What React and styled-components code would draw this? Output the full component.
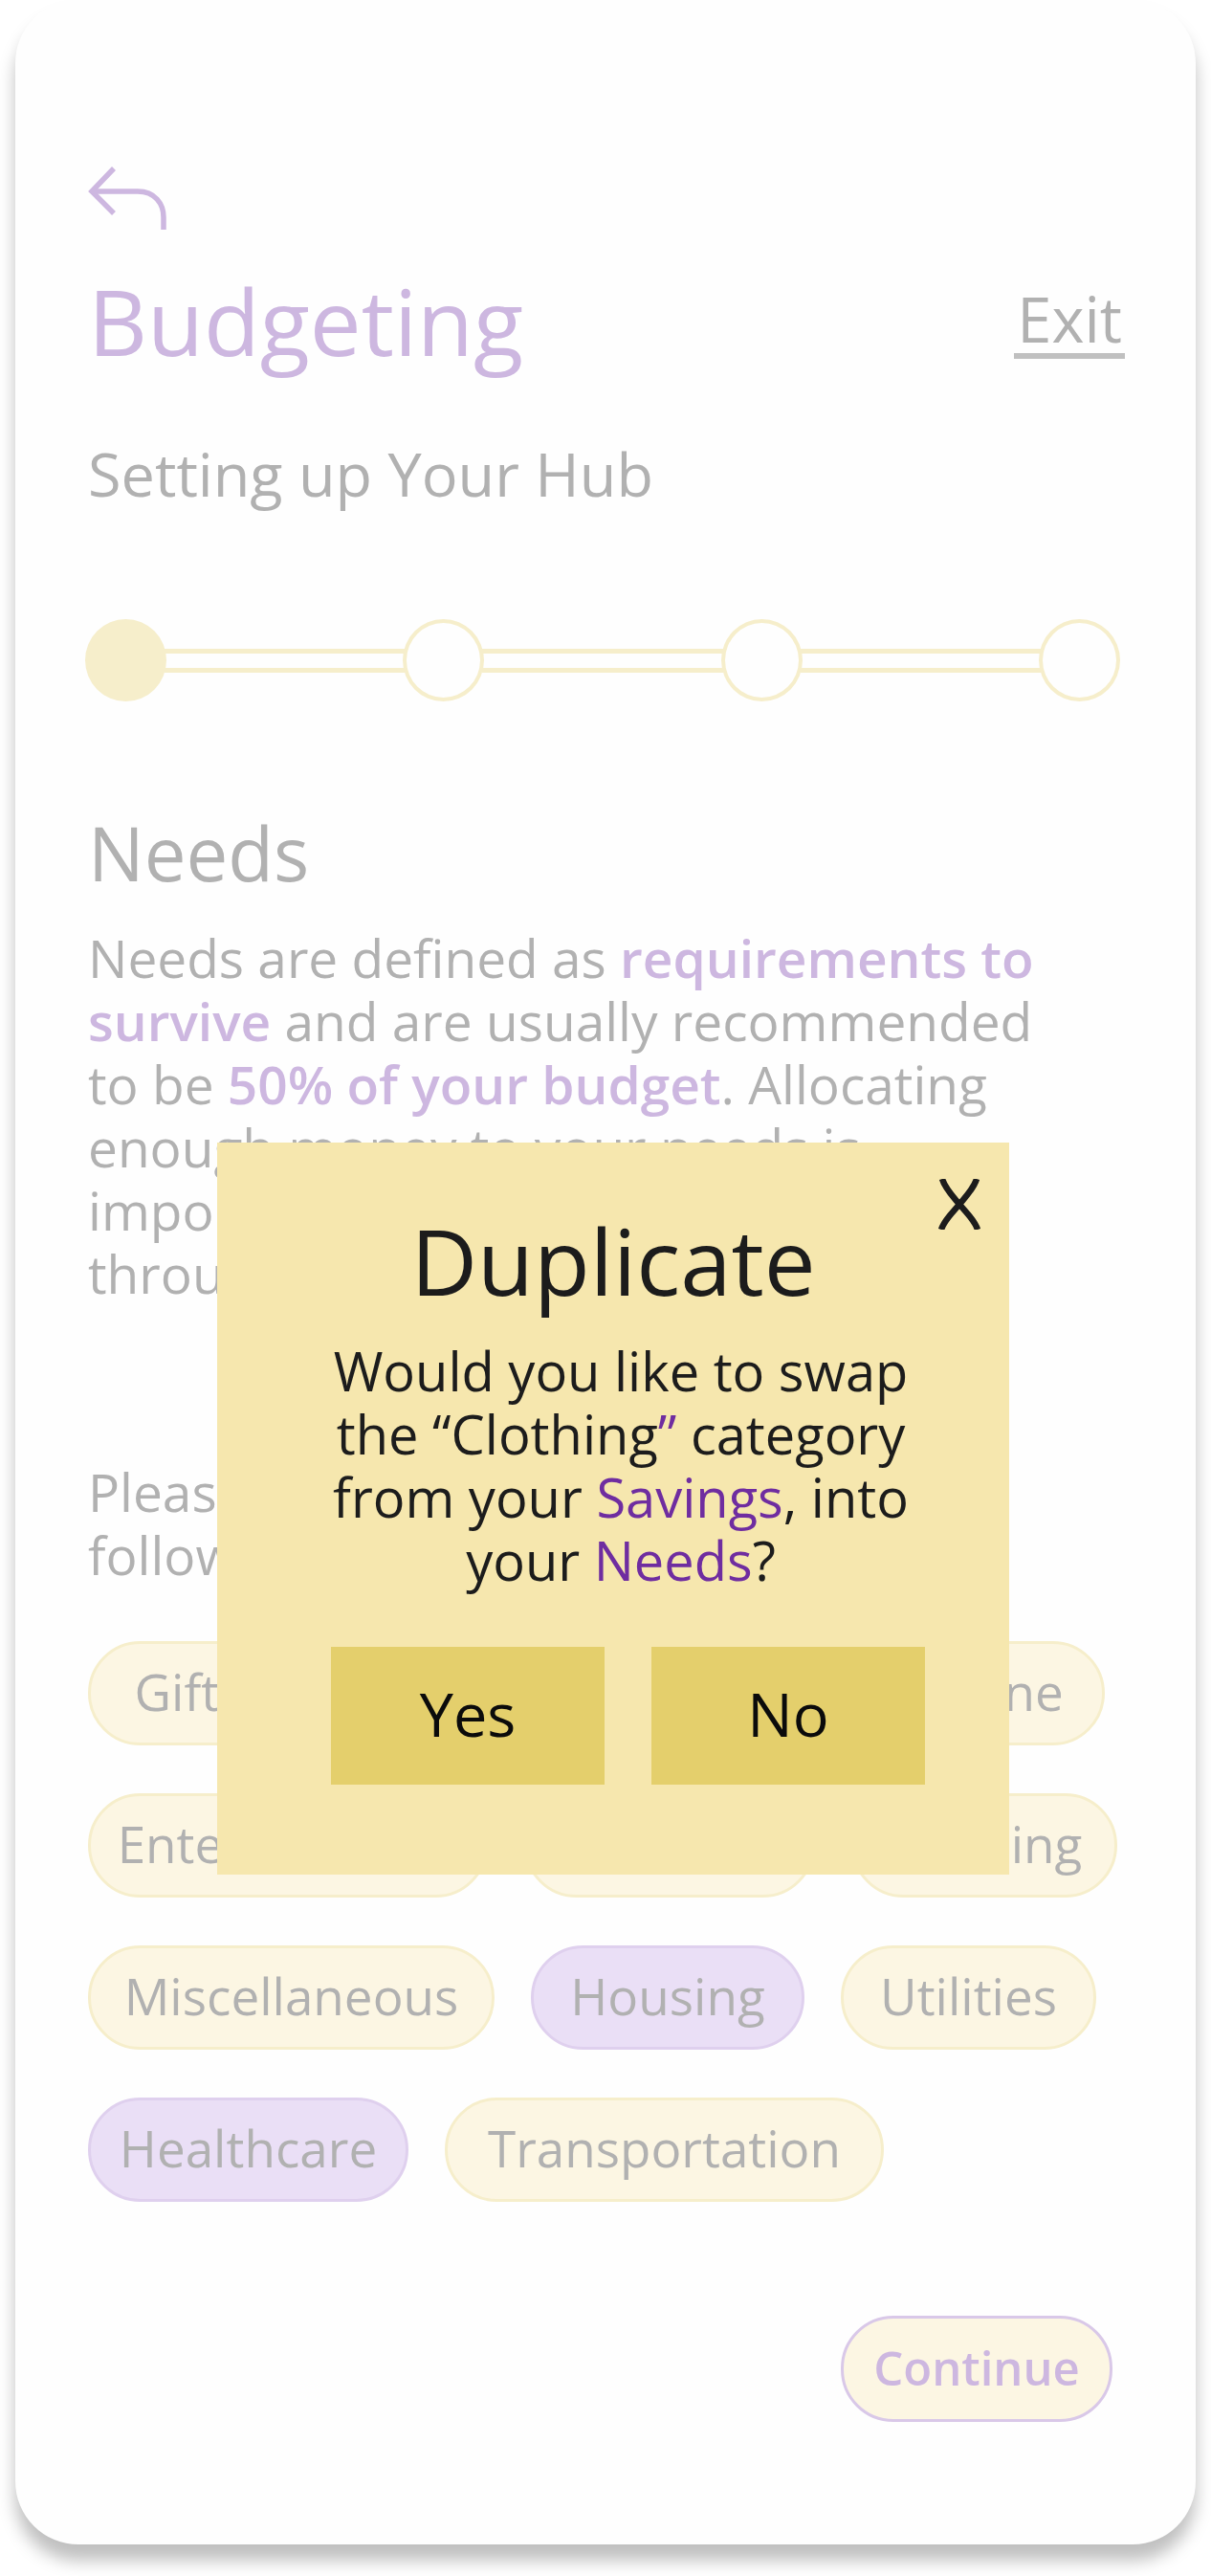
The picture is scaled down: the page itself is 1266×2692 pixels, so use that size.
import React from "react";
import styled, { createGlobalStyle } from "styled-components";

const color = {
  surface: "#fefefe",
  muted: "#b1b1b1",
  mutedPurple: "#cdb7e0",
  ink: "#1c1c1c",
  purple: "#6f2da0",
  track: "#f6eecb",
  cream: "#fcf6e3",
  lilac: "#eadff6",
  lilacEdge: "#dfd0ee",
  modal: "#f6e7ae",
  action: "#e4cf6c",
};

const GlobalStyle = createGlobalStyle`
  *, *::before, *::after { box-sizing: border-box; }
  body {
    margin: 0;
    background: #ffffff;
    font-family: "Open Sans", "Noto Sans", sans-serif;
  }
  button { font-family: inherit; cursor: pointer; }
  h1, h2, p, ol, ul { margin: 0; padding: 0; }
`;

const Page = styled.div`
  padding: 0 16px 33px;
`;

const Screen = styled.main`
  position: relative;
  display: flex;
  flex-direction: column;
  padding: 174px 74px 128px 76px;
  background: ${color.surface};
  border-radius: 66px;
  box-shadow: 0 17px 17px rgba(0, 0, 0, 0.25);
  color: ${color.muted};
`;

const BackButton = styled.button`
  align-self: flex-start;
  display: block;
  padding: 0;
  border: 0;
  background: none;
  color: ${color.mutedPurple};
  line-height: 0;
`;

const Header = styled.header`
  display: flex;
  align-items: center;
  justify-content: space-between;
  margin-top: 45px;
`;

const Title = styled.h1`
  font-size: 96px;
  line-height: 100px;
  font-weight: 400;
  color: ${color.mutedPurple};
`;

const ExitLink = styled.a`
  padding: 2px 3px 0;
  border-bottom: 6px solid #c0c0c0;
  font-size: 65px;
  line-height: 72px;
  color: inherit;
  text-decoration: none;
`;

const Subtitle = styled.p`
  margin-top: 77px;
  font-size: 63px;
  line-height: 66px;
`;

const Stepper = styled.ol`
  display: flex;
  align-items: center;
  margin: 119px 5px 0 -3px;
  list-style: none;
`;

const Step = styled.li`
  display: flex;
  align-items: center;
  flex: ${(p) => (p.$first ? "none" : "1")};
`;

const Dot = styled.span`
  flex: none;
  width: 85px;
  height: 86px;
  border: 4px solid ${color.track};
  border-radius: 50%;
  background: ${(p) => (p.$filled ? color.track : color.surface)};
`;

const Track = styled.span`
  flex: 1;
  height: 25px;
  margin: 0 -2px;
  border: solid ${color.track};
  border-width: 5px 0;
`;

const SectionTitle = styled.h2`
  margin-top: 118px;
  font-size: 78px;
  line-height: 80px;
  font-weight: 400;
`;

const Copy = styled.p`
  margin-top: ${(p) => p.$gap}px;
  font-size: 55px;
  line-height: 66px;
  white-space: nowrap;
`;

const Strong = styled.strong`
  font-weight: 600;
  color: ${color.mutedPurple};
`;

const ChipRows = styled.div`
  display: flex;
  flex-direction: column;
  gap: 50px;
  margin-top: 57px;
`;

const ChipRow = styled.div`
  display: flex;
  gap: 38px;
`;

const Chip = styled.button`
  flex: none;
  display: flex;
  align-items: center;
  justify-content: center;
  width: ${(p) => p.$width}px;
  height: 109px;
  padding: 0 0 4px;
  border: 3px solid ${(p) => (p.$selected ? color.lilacEdge : color.track)};
  border-radius: 55px;
  background: ${(p) => (p.$selected ? color.lilac : color.cream)};
  color: ${color.muted};
  font-size: 53px;
  line-height: 66px;
`;

const ContinueButton = styled.button`
  align-self: flex-end;
  width: 284px;
  height: 111px;
  margin: 119px 13px 0 0;
  padding: 0 0 4px;
  border: 3px solid #d9c8e8;
  border-radius: 55px;
  background: ${color.cream};
  color: ${color.mutedPurple};
  font-size: 49px;
  line-height: 66px;
  font-weight: 600;
`;

const Dialog = styled.section`
  position: absolute;
  top: 1194px;
  left: 211px;
  right: 195px;
  padding: 73px 0 94px;
  background: ${color.modal};
  color: ${color.ink};
  text-align: center;
`;

const CloseButton = styled.button`
  position: absolute;
  top: 38px;
  right: 30px;
  padding: 0;
  border: 0;
  background: none;
  color: inherit;
  line-height: 0;
`;

const DialogTitle = styled.h2`
  font-size: 96px;
  line-height: 100px;
  font-weight: 400;
`;

const DialogText = styled.p`
  margin-top: 32px;
  padding-left: 16px;
  font-size: 56px;
  line-height: 66px;
`;

const Accent = styled.span`
  color: ${color.purple};
`;

const Actions = styled.div`
  display: flex;
  gap: 49px;
  margin-top: 58px;
  padding: 0 88px 0 119px;
`;

const ActionButton = styled.button`
  flex: 1;
  height: 144px;
  padding: 0 0 4px;
  border: 0;
  background: ${color.action};
  color: #0b0b0b;
  font-size: 63px;
  line-height: 66px;
`;

const steps = ["Needs", "Wants", "Savings", "Review"];

const chipRows = [
  [
    { label: "Gifts", width: 211 },
    { label: "Subscriptions", width: 531 },
    { label: "Phone", width: 245 },
  ],
  [
    { label: "Entertainment", width: 418 },
    { label: "Groceries", width: 304 },
    { label: "Clothing", width: 278 },
  ],
  [
    { label: "Miscellaneous", width: 425 },
    { label: "Housing", width: 286, selected: true },
    { label: "Utilities", width: 267 },
  ],
  [
    { label: "Healthcare", width: 335, selected: true },
    { label: "Transportation", width: 459 },
  ],
];

function BackIcon() {
  return (
    <svg width="85" height="66" viewBox="0 0 85 66" fill="none" stroke="currentColor" strokeWidth="5.5" aria-hidden="true">
      <path d="M27 2 4 26l23 23" />
      <path d="M4 26h48c18 0 27 13 27 27v13" />
    </svg>
  );
}

function CloseIcon() {
  return (
    <svg width="44" height="53" viewBox="0 0 44 53" fill="none" stroke="currentColor" strokeWidth="6.5" aria-hidden="true">
      <path d="M4 0C7 10 15 18 22 26.5S38 43 41 53" />
      <path d="M40 0C37 10 29 18 22 26.5S6 43 3 53" />
    </svg>
  );
}

export default function App() {
  return (
    <Page>
      <GlobalStyle />
      <Screen>
        <BackButton type="button" aria-label="Back">
          <BackIcon />
        </BackButton>
        <Header>
          <Title>Budgeting</Title>
          <ExitLink href="#exit">Exit</ExitLink>
        </Header>
        <Subtitle>Setting up Your Hub</Subtitle>

        <Stepper>
          {steps.map((step, i) => (
            <Step key={step} $first={i === 0} aria-label={step}>
              {i > 0 && <Track />}
              <Dot $filled={i === 0} />
            </Step>
          ))}
        </Stepper>

        <SectionTitle>Needs</SectionTitle>
        <Copy $gap={37}>
          Needs are defined as <Strong>requirements to</Strong>
          <br />
          <Strong>survive</Strong> and are usually recommended
          <br />
          to be <Strong>50% of your budget</Strong>. Allocating
          <br />
          enough money to your needs is
          <br />
          important for your wellbeing
          <br />
          throughout the year.
        </Copy>
        <Copy $gap={162}>
          Please select from the
          <br />
          following categories:
        </Copy>

        <ChipRows>
          {chipRows.map((row) => (
            <ChipRow key={row[0].label}>
              {row.map((chip) => (
                <Chip
                  key={chip.label}
                  type="button"
                  $width={chip.width}
                  $selected={chip.selected}
                  aria-pressed={Boolean(chip.selected)}
                >
                  {chip.label}
                </Chip>
              ))}
            </ChipRow>
          ))}
        </ChipRows>

        <ContinueButton type="button">Continue</ContinueButton>

        <Dialog role="dialog" aria-labelledby="duplicate-title">
          <CloseButton type="button" aria-label="Close">
            <CloseIcon />
          </CloseButton>
          <DialogTitle id="duplicate-title">Duplicate</DialogTitle>
          <DialogText>
            Would you like to swap
            <br />
            the “Clothing<Accent>”</Accent> category
            <br />
            from your <Accent>Savings</Accent>, into
            <br />
            your <Accent>Needs</Accent>?
          </DialogText>
          <Actions>
            <ActionButton type="button">Yes</ActionButton>
            <ActionButton type="button">No</ActionButton>
          </Actions>
        </Dialog>
      </Screen>
    </Page>
  );
}
